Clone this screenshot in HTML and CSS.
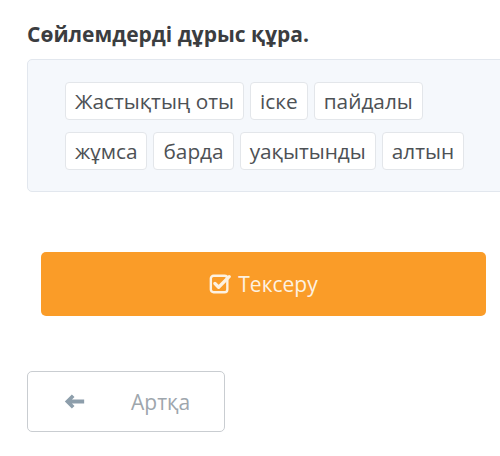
FILE: index.html
```html
<!DOCTYPE html>
<html>
<head>
<meta charset="utf-8">
<link rel="stylesheet" href="styles.css">
</head>
<body>
<div class="page">
  <h1 class="title">Сөйлемдерді дұрыс құра.</h1>
  <div class="box">
    <div class="chips">
      <span class="chip">Жастықтың оты</span>
      <span class="chip">іске</span>
      <span class="chip">пайдалы</span>
      <span class="chip">жұмса</span>
      <span class="chip">барда</span>
      <span class="chip">уақытынды</span>
      <span class="chip">алтын</span>
    </div>
  </div>
  <button class="check">
    <svg class="check-icon" viewBox="0 0 24 24" width="22" height="22">
      <rect x="2" y="3" width="18" height="18" rx="3" fill="none" stroke="currentColor" stroke-width="2.6"/>
      <path d="M6.5 11.5 L10.5 15.5 L22 4" fill="none" stroke="currentColor" stroke-width="3.6" stroke-linecap="round" stroke-linejoin="round"/>
    </svg>
    <span>Тексеру</span>
  </button>
  <button class="back">
    <svg class="arrow" viewBox="0 0 20 14" width="21" height="15">
      <path d="M7.5 0.3 L0.8 7 L7.5 13.7 L10 11.2 L7.6 8.9 H19.2 V5.1 H7.6 L10 2.8 Z" fill="currentColor"/>
    </svg>
    <span>Артқа</span>
  </button>
</div>
</body>
</html>
```
FILE: styles.css
```css
html, body {
  margin: 0;
  padding: 0;
  background: #ffffff;
  overflow: hidden;
}
.page {
  width: 500px;
  height: 456px;
  font-family: "Open Sans", "Noto Sans", sans-serif;
  display: flex;
  flex-direction: column;
  align-items: flex-start;
}
.title {
  margin: 20px 0 0 27px;
  font-size: 21px;
  line-height: 28px;
  font-weight: 700;
  color: #3b3d40;
}
.box {
  margin: 11px 0 0 27px;
  width: 490px;
  box-sizing: border-box;
  background: #f5f8fc;
  border: 1px solid #e2e7ee;
  border-radius: 5px;
  padding: 22px 0 21px 37px;
}
.chips {
  width: 410px;
  display: flex;
  flex-wrap: wrap;
  column-gap: 6px;
  row-gap: 12px;
}
.chip {
  background: #ffffff;
  border: 1px solid #e3e6ea;
  border-radius: 4px;
  padding: 5px 9px;
  font-size: 20.8px;
  line-height: 26px;
  color: #4d5155;
}
.check {
  margin: 60px 0 0 41px;
  width: 445px;
  height: 64px;
  border: none;
  border-radius: 5px;
  background: #fa9c28;
  color: #fdf2e2;
  font-family: "Open Sans", "Noto Sans", sans-serif;
  font-size: 21px;
  display: flex;
  align-items: center;
  justify-content: center;
  gap: 7px;
  padding: 0;
}
.check-icon {
  display: block;
}
.back {
  margin: 55px 0 0 27px;
  width: 198px;
  height: 61px;
  background: #ffffff;
  border: 1px solid #c9cdd1;
  border-radius: 5px;
  font-family: "Open Sans", "Noto Sans", sans-serif;
  font-size: 21px;
  color: #9ea6ad;
  display: flex;
  align-items: center;
  padding: 0 0 0 36px;
  gap: 46px;
}
.arrow {
  display: block;
  color: #8d9eab;
}
```
